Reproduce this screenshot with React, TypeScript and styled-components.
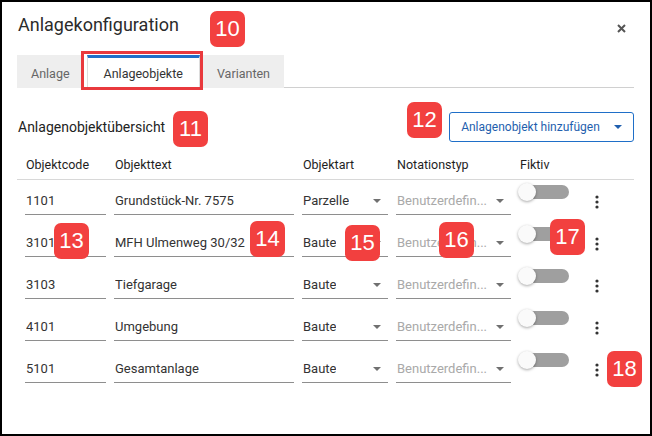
import React from "react";
import styled, { createGlobalStyle } from "styled-components";

const GlobalStyle = createGlobalStyle`
  html, body {
    margin: 0;
    padding: 0;
    background: #fff;
  }
  body {
    font-family: Roboto, "Liberation Sans", sans-serif;
    color: #333;
  }
`;

const Frame = styled.div`
  position: relative;
  width: 652px;
  height: 436px;
  box-sizing: border-box;
  border: 2px solid #000;
  padding: 11px 16px 0 15px;
  overflow: hidden;
`;

const TitleRow = styled.div`
  display: flex;
  justify-content: space-between;
  align-items: flex-start;
  height: 24px;
`;

const DialogTitle = styled.h1`
  margin: 0 0 0 1px;
  font-size: 18px;
  line-height: 24px;
  font-weight: 400;
  color: #2b2b2b;
`;

const CloseButton = styled.button`
  border: 0;
  background: none;
  padding: 0;
  margin: 11px 8px 0 0;
  width: 9px;
  height: 9px;
  display: flex;
  cursor: pointer;
`;

const TabBar = styled.div`
  display: flex;
  gap: 3px;
  margin-top: 18px;
  border-bottom: 1px solid #d0d0d0;
`;

const Tab = styled.div<{ $active?: boolean }>`
  height: 33px;
  box-sizing: border-box;
  padding: 0 ${({ $active }) => ($active ? "16px" : "13px")};
  display: flex;
  align-items: center;
  font-size: 12.5px;
  color: ${({ $active }) => ($active ? "#333" : "#666")};
  background: ${({ $active }) => ($active ? "#fff" : "#eeeeee")};
  border-top: 3px solid ${({ $active }) => ($active ? "#1f6fc8" : "#eeeeee")};
  border-left: 1px solid ${({ $active }) => ($active ? "#dcdcdc" : "#eeeeee")};
  border-right: 1px solid ${({ $active }) => ($active ? "#dcdcdc" : "#eeeeee")};
  margin-bottom: -1px;
`;

const SectionHead = styled.div`
  display: flex;
  justify-content: space-between;
  align-items: center;
  margin-top: 24px;
  height: 30px;
`;

const SectionTitle = styled.h2`
  margin: 0 0 0 1px;
  font-size: 14px;
  font-weight: 400;
  color: #222;
`;

const AddButton = styled.button`
  height: 30px;
  width: 185px;
  box-sizing: border-box;
  border: 1px solid #1f6fc8;
  border-radius: 3px;
  background: #fff;
  color: #1f5fae;
  font-family: inherit;
  font-size: 12px;
  display: flex;
  align-items: center;
  justify-content: center;
  gap: 8px;
  padding: 0;
`;

const gridCols = "81px 180px 86px 115px 60px 20px";

const HeaderRow = styled.div`
  display: grid;
  grid-template-columns: ${gridCols};
  column-gap: 8px;
  align-items: end;
  height: 38px;
  box-sizing: border-box;
  padding: 0 0 6px 9px;
  border-bottom: 1px solid #d8d8d8;
`;

const HeadCell = styled.div`
  font-size: 12.5px;
  font-weight: 400;
  color: #1e1e1e;
  line-height: 16px;
`;

const Row = styled.div`
  display: grid;
  grid-template-columns: ${gridCols};
  column-gap: 8px;
  align-items: start;
  height: 42px;
  padding-left: 8px;
`;

const Field = styled.div<{ $placeholder?: boolean }>`
  margin-top: 7px;
  height: 28px;
  box-sizing: border-box;
  border-bottom: 1px solid #8e8e8e;
  display: flex;
  align-items: center;
  justify-content: space-between;
  padding: 0 7px 0 1px;
  font-size: 13px;
  color: ${({ $placeholder }) => ($placeholder ? "#a9a9a9" : "#333")};
  min-width: 0;
`;

const FieldText = styled.span`
  white-space: nowrap;
  overflow: hidden;
  text-overflow: ellipsis;
`;

const Caret = styled.span<{ $color?: string }>`
  flex: none;
  width: 0;
  height: 0;
  border-left: 4px solid transparent;
  border-right: 4px solid transparent;
  border-top: 4px solid ${({ $color }) => $color || "#707070"};
  margin-left: 6px;
`;

const Switch = styled.div`
  position: relative;
  margin-top: 5px;
  width: 50px;
  height: 14px;
  border-radius: 7px;
  background: #9f9f9f;
`;

const Thumb = styled.span`
  position: absolute;
  left: -1px;
  top: -2px;
  width: 18px;
  height: 18px;
  border-radius: 50%;
  background: #fafafa;
  box-shadow: 0 1px 3px rgba(0, 0, 0, 0.35);
`;

const MenuButton = styled.div`
  margin-top: 15px;
  display: flex;
  justify-content: center;
`;

const Badge = styled.div<{ $x: number; $y: number }>`
  position: absolute;
  left: ${({ $x }) => $x - 2}px;
  top: ${({ $y }) => $y - 2}px;
  width: 35px;
  height: 36px;
  border-radius: 7px;
  background: #f2403f;
  color: #fff;
  font-family: "Liberation Sans", Arial, sans-serif;
  font-size: 22px;
  display: flex;
  align-items: center;
  justify-content: center;
`;

const Highlight = styled.div`
  position: absolute;
  left: 79px;
  top: 49px;
  width: 122px;
  height: 39px;
  box-sizing: border-box;
  border: 3px solid #e9393d;
`;

const rows = [
  { code: "1101", text: "Grundstück-Nr. 7575", art: "Parzelle" },
  { code: "3101", text: "MFH Ulmenweg 30/32", art: "Baute" },
  { code: "3103", text: "Tiefgarage", art: "Baute" },
  { code: "4101", text: "Umgebung", art: "Baute" },
  { code: "5101", text: "Gesamtanlage", art: "Baute" },
];

const badges = [
  { n: 10, x: 210, y: 11 },
  { n: 11, x: 173, y: 111 },
  { n: 12, x: 407, y: 102 },
  { n: 13, x: 54, y: 223 },
  { n: 14, x: 250, y: 221 },
  { n: 15, x: 345, y: 225 },
  { n: 16, x: 439, y: 222 },
  { n: 17, x: 550, y: 219 },
  { n: 18, x: 607, y: 351 },
];

const Kebab = () => (
  <svg width="4" height="14" viewBox="0 0 4 14">
    <circle cx="2" cy="2" r="1.6" fill="#333" />
    <circle cx="2" cy="7" r="1.6" fill="#333" />
    <circle cx="2" cy="12" r="1.6" fill="#333" />
  </svg>
);

export default function App() {
  return (
    <>
      <GlobalStyle />
      <Frame>
        <TitleRow>
          <DialogTitle>Anlagekonfiguration</DialogTitle>
          <CloseButton aria-label="Schliessen">
            <svg width="9" height="9" viewBox="0 0 9 9">
              <path d="M1 1 L8 8 M8 1 L1 8" stroke="#555" strokeWidth="2" />
            </svg>
          </CloseButton>
        </TitleRow>

        <TabBar>
          <Tab>Anlage</Tab>
          <Tab $active>Anlageobjekte</Tab>
          <Tab>Varianten</Tab>
        </TabBar>

        <SectionHead>
          <SectionTitle>Anlagenobjektübersicht</SectionTitle>
          <AddButton>
            Anlagenobjekt hinzufügen
            <Caret $color="#1f5fae" />
          </AddButton>
        </SectionHead>

        <HeaderRow>
          <HeadCell>Objektcode</HeadCell>
          <HeadCell>Objekttext</HeadCell>
          <HeadCell>Objektart</HeadCell>
          <HeadCell>Notationstyp</HeadCell>
          <HeadCell>Fiktiv</HeadCell>
          <HeadCell />
        </HeaderRow>

        {rows.map((r) => (
          <Row key={r.code}>
            <Field>
              <FieldText>{r.code}</FieldText>
            </Field>
            <Field>
              <FieldText>{r.text}</FieldText>
            </Field>
            <Field>
              <FieldText>{r.art}</FieldText>
              <Caret />
            </Field>
            <Field $placeholder>
              <FieldText>Benutzerdefin...</FieldText>
              <Caret />
            </Field>
            <Switch>
              <Thumb />
            </Switch>
            <MenuButton>
              <Kebab />
            </MenuButton>
          </Row>
        ))}

        <Highlight />
        {badges.map((b) => (
          <Badge key={b.n} $x={b.x} $y={b.y}>
            {b.n}
          </Badge>
        ))}
      </Frame>
    </>
  );
}
